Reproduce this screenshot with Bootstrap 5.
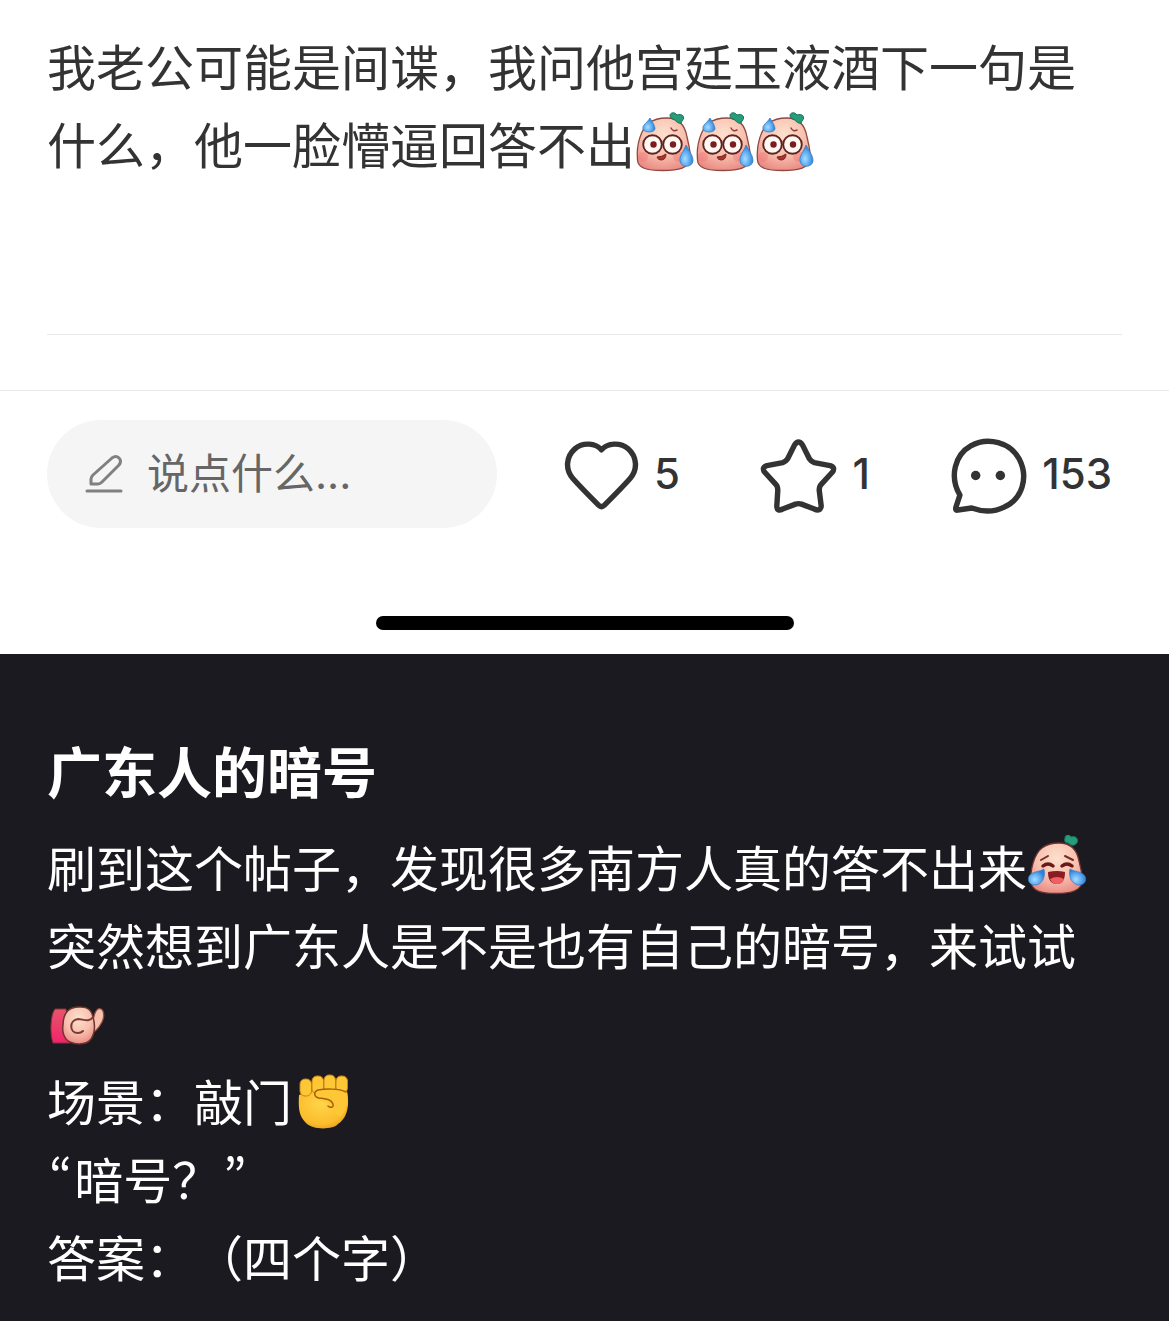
<!DOCTYPE html>
<html lang="zh-CN">
<head>
<meta charset="utf-8">
<meta name="viewport" content="width=device-width, initial-scale=1">
<title>广东人的暗号</title>
<link href="https://cdn.jsdelivr.net/npm/bootstrap@5.3.0/dist/css/bootstrap.min.css" rel="stylesheet">
<style>
  body { font-family: "Noto Sans CJK SC", sans-serif; background: #1b1a20; }
  .post { background: #fff; color: #333; }
  .gutter { padding-left: 47px; padding-right: 47px; }
  .post-body { padding-top: 26px; }
  .copy { font-size: 49px; line-height: 78px; margin: 0; text-spacing-trim: space-all; }
  .rule { height: 1px; background: #e9e9e9; }
  .post-body .rule { margin-top: 152px; margin-bottom: 55px; }
  .comment-bar { padding-top: 29px; padding-bottom: 88px; }
  .say { flex: 0 1 450px; min-width: 0; height: 108px; padding: 0 38px; gap: 22px; background: #f5f5f5; border-radius: 54px; }
  .say input { min-width: 0; font-family: Inter, "Noto Sans CJK SC", sans-serif; font-size: 42px; line-height: 60px; color: #333; outline: 0; }
  .say input::placeholder { color: #666; opacity: 1; }
  .actions { padding-left: 67px; padding-right: 10px; }
  .act { gap: 15px; padding: 0; border: 0; background: none; color: #333; font: 500 42px/60px Inter, sans-serif; }
  .act svg { width: 75px; height: 75px; overflow: visible; }
  .home-bar { width: 418px; max-width: 60%; height: 14px; border-radius: 7px; background: #000; }
  .post-foot { padding-bottom: 24px; }
  .answer { color: #fff; padding-top: 76px; padding-bottom: 24px; }
  .headline { font-size: 55px; line-height: 78px; font-weight: 700; margin: 0 0 19px; }
  .emo { width: 60px; height: 60px; vertical-align: -8px; }
  .quo { font-feature-settings: "pwid" 1; padding: 0 2px; }
</style>
</head>
<body>
<svg width="0" height="0" class="position-absolute" aria-hidden="true">
  <defs>
    <radialGradient id="skin" cx=".5" cy=".3" r=".75"><stop offset="0" stop-color="#fde0cd"/><stop offset=".55" stop-color="#f8bfae"/><stop offset="1" stop-color="#e98680"/></radialGradient>
    <radialGradient id="drop" cx=".4" cy=".65" r=".6"><stop offset="0" stop-color="#a9dcff"/><stop offset=".6" stop-color="#5aaaf0"/><stop offset="1" stop-color="#2f7fd6"/></radialGradient>
    <radialGradient id="gold" cx=".45" cy=".4" r=".7"><stop offset="0" stop-color="#ffd54a"/><stop offset=".7" stop-color="#fbbd2c"/><stop offset="1" stop-color="#e4931c"/></radialGradient>
    <linearGradient id="sleeve" x1="0" y1="0" x2="0" y2="1"><stop offset="0" stop-color="#e8566a"/><stop offset="1" stop-color="#f0246a"/></linearGradient>
    <symbol id="sweat" viewBox="0 0 60 60">
      <path d="M2.500 48C1 33 6 17 14 11C19 7 25 6 32 6C44 6 50 13 52 25C54 34 56 41 55 47C54 56 44 58.500 28 58.500C11 58.500 3 56 2.500 48Z" fill="url(#skin)" stroke="#8e4a42" stroke-width="1.300"/>
      <ellipse cx="8" cy="45" rx="5" ry="5" fill="#f26d6d" opacity=".35"/><ellipse cx="44" cy="45" rx="6" ry="5" fill="#f26d6d" opacity=".35"/>
      <path d="M35 3C36 0 40 0 42 3C47 1 51 5 47 9L46 11C42 12 41 8 38 7C37 7 35 6 35 3Z" fill="#269d78" stroke="#16745a" stroke-width="1"/>
      <path d="M15 6C12 11 7 13 8 17C9 21 19 21 20 17C20 13 17 10 15 6Z" fill="url(#drop)" stroke="#3a7fc8" stroke-width=".8"/>
      <path d="M36 16Q38 20 42 18" fill="none" stroke="#8a4038" stroke-width="1.500" stroke-linecap="round"/>
      <circle cx="17.500" cy="32.500" r="9.300" fill="#fff8f2" stroke="#5d2420" stroke-width="1.900"/>
      <circle cx="37.500" cy="32.500" r="9.300" fill="#fff8f2" stroke="#5d2420" stroke-width="1.900"/>
      <circle cx="18.500" cy="32.500" r="3.200" fill="#7a1d1f"/><circle cx="38" cy="32.500" r="3.200" fill="#7a1d1f"/>
      <path d="M22 45Q27 45 31 42Q31 48 26 48Q23 48 22 45Z" fill="#a7332d" stroke="#7a2a22"/>
      <path d="M51 33C49 39 44 44 45 49C46 56 57 56 58 49C58 43 54 39 51 33Z" fill="url(#drop)" stroke="#3a7fc8" stroke-width=".8"/>
    </symbol>
    <symbol id="tears" viewBox="0 0 60 60">
      <path d="M4 47C3 35 7 19 15 13C20 9 26 8 32 8C44 8 50 15 52 26C54 34 56 41 55 47C54 56 44 58.500 29 58.500C14 58.500 5 56 4 47Z" fill="url(#skin)" stroke="#6b342f" stroke-width="1.300"/>
      <path d="M38 3C38 -1 43 -1 44 2C49 0 53 5 49 9C45 12 43 9 41 8C38 8 37 6 38 3Z" fill="#269d78" stroke="#16745a" stroke-width="1"/>
      <path d="M14 25L21 21M38 21L46 25" stroke="#762c28" stroke-width="2" stroke-linecap="round"/>
      <path d="M16 31Q21 27 26 31M35 31Q40 27 45 31" fill="none" stroke="#6a1718" stroke-width="3.500" stroke-linecap="round"/>
      <path d="M21 37Q30 35 38 37Q38 49 30 49Q21 49 21 37Z" fill="#8b1c20"/><path d="M23 44Q30 40 37 44Q35 49 30 49Q25 49 23 44Z" fill="#ef6066"/>
      <path d="M17 34C19 43 14 50 8 50C1 50 0 43 3 40C7 36 12 37 17 34Z" fill="url(#drop)" stroke="#3a7fc8" stroke-width=".8"/>
      <path d="M43 34C41 43 46 50 52 50C59 50 60 43 57 40C53 36 48 37 43 34Z" fill="url(#drop)" stroke="#3a7fc8" stroke-width=".8"/>
    </symbol>
    <symbol id="punch" viewBox="0 -5 60 60">
      <path d="M19 13H8C3 19 3 39 6 47H23Z" fill="url(#sleeve)" stroke="#8c2d3c"/>
      <path d="M43 29C48 24 46 16 51 13C57 11 58 20 55 26C52 32 47 37 42 38Z" fill="#f9c0ae" stroke="#8e4a42" stroke-width="1.300"/>
      <path d="M16 29C16 16 23 10 34 11C41 11 45 15 46 21C48 28 48 37 44 43C39 50 24 49 19 43C16 39 15 35 16 29Z" fill="url(#skin)" stroke="#70352d" stroke-width="1.500"/>
      <path d="M46 21C42 27 36 23 31 23C22 24 22 37 31 37Q34 37 36 35" fill="none" stroke="#7b3a32" stroke-width="2" stroke-linecap="round"/>
    </symbol>
    <symbol id="fist" viewBox="0 -4 60 60">
      <path d="M7 22C6 38 8 44 14 50C20 57 41 57 46 51C55 45 58 33 55 18L45 14L20 17Z" fill="url(#gold)"/>
      <g fill="#fdc735" stroke="#c9811a" stroke-width="1"><rect x="44" y="3" width="11.500" height="17" rx="5"/><rect x="32" y="2" width="11.500" height="18" rx="5"/><rect x="20" y="3" width="11.500" height="18" rx="5"/><rect x="8" y="6" width="11.500" height="17" rx="5"/></g>
      <path d="M24 19C31 15 48 16 55 19C57 31 53 39 48 44C40 40 40 32 35 29C29 28 21 26 24 19Z" fill="#fdc735"/>
      <path d="M54 19C47 15 32 16 26 17C21 19 22 24 27 25C34 26 39 26 41 31C42 35 38 35 36 33" fill="none" stroke="#a8610f" stroke-width="1.500" stroke-linecap="round"/>
    </symbol>
  </defs>
</svg>

<article class="post">
  <div class="post-body gutter">
    <p class="copy">我老公可能是间谍，我问他宫廷玉液酒下一句是什么，他一脸懵逼回答不出<svg class="emo" role="img" aria-label="尴尬"><use href="#sweat"/></svg><svg class="emo" role="img" aria-label="尴尬"><use href="#sweat"/></svg><svg class="emo" role="img" aria-label="尴尬"><use href="#sweat"/></svg></p>
    <div class="rule"></div>
  </div>
  <div class="rule"></div>
  <div class="comment-bar gutter d-flex align-items-center">
    <label class="say d-flex align-items-center">
      <svg width="40" height="44" viewBox="0 0 40 44" class="flex-shrink-0" fill="none" stroke="#808080" stroke-width="3" stroke-linecap="round" stroke-linejoin="round" aria-hidden="true"><path d="M6 32L6 27Q6 25 8 23L27 6Q31 3 34 6Q37 9 34 13L17 30Q15 32 13 32ZM2 39H36"/></svg>
      <input type="text" class="border-0 bg-transparent p-0 w-100" placeholder="说点什么..." aria-label="说点什么">
    </label>
    <div class="actions d-flex flex-grow-1 justify-content-between">
      <button type="button" class="act d-flex align-items-center" aria-label="点赞 5">
        <svg viewBox="0 -1 76 76" fill="none" stroke="#333" stroke-width="5.500" stroke-linejoin="round" aria-hidden="true"><path d="M38 12C32 5 19 4 11 11C2 19 1 32 9 41C17 50 26 59 35 68Q38 71 41 68C50 59 59 50 67 41C75 32 74 19 65 11C57 4 44 5 38 12Z"/></svg>
        <span>5</span>
      </button>
      <button type="button" class="act d-flex align-items-center" aria-label="收藏 1">
        <svg viewBox="1 -2 76 76" fill="none" stroke="#333" stroke-width="5.500" stroke-linejoin="round" aria-hidden="true"><path d="M34 6Q38 0 42 6L49 20Q51 23 54 24L70 27Q76 29 72 34L61 46Q59 48 59 52L61 68Q60 74 54 71L41 66Q38 65 35 66L22 71Q16 74 16 68L17 52Q17 48 15 46L4 34Q0 29 6 27L22 24Q25 23 27 20Z"/></svg>
        <span>1</span>
      </button>
      <button type="button" class="act d-flex align-items-center" aria-label="评论 153">
        <svg viewBox="1 -2 76 76" fill="none" stroke="#333" stroke-width="5.500" stroke-linejoin="round" aria-hidden="true"><path d="M9 57C-2 38 4 16 20 7C38-3 60 4 69 20C79 39 72 61 54 69C44 74 32 74 21 70L7 72Q4 73 5 69Z"/><circle cx="25" cy="37" r="4.800" fill="#333" stroke="none"/><circle cx="50" cy="37" r="4.800" fill="#333" stroke="none"/></svg>
        <span>153</span>
      </button>
    </div>
  </div>
  <div class="post-foot"><div class="home-bar mx-auto"></div></div>
</article>

<section class="answer gutter">
  <h1 class="headline">广东人的暗号</h1>
  <p class="copy">刷到这个帖子，发现很多南方人真的答不出来<svg class="emo" role="img" aria-label="笑哭"><use href="#tears"/></svg><br>突然想到广东人是不是也有自己的暗号，来试试<svg class="emo" role="img" aria-label="碰拳"><use href="#punch"/></svg><br>场景：敲门<svg class="emo" role="img" aria-label="拳头"><use href="#fist"/></svg><br><span class="quo">“</span>暗号？<span class="quo">”</span><br>答案：（四个字）</p>
</section>
<script src="https://cdn.jsdelivr.net/npm/bootstrap@5.3.0/dist/js/bootstrap.bundle.min.js"></script>
</body>
</html>
